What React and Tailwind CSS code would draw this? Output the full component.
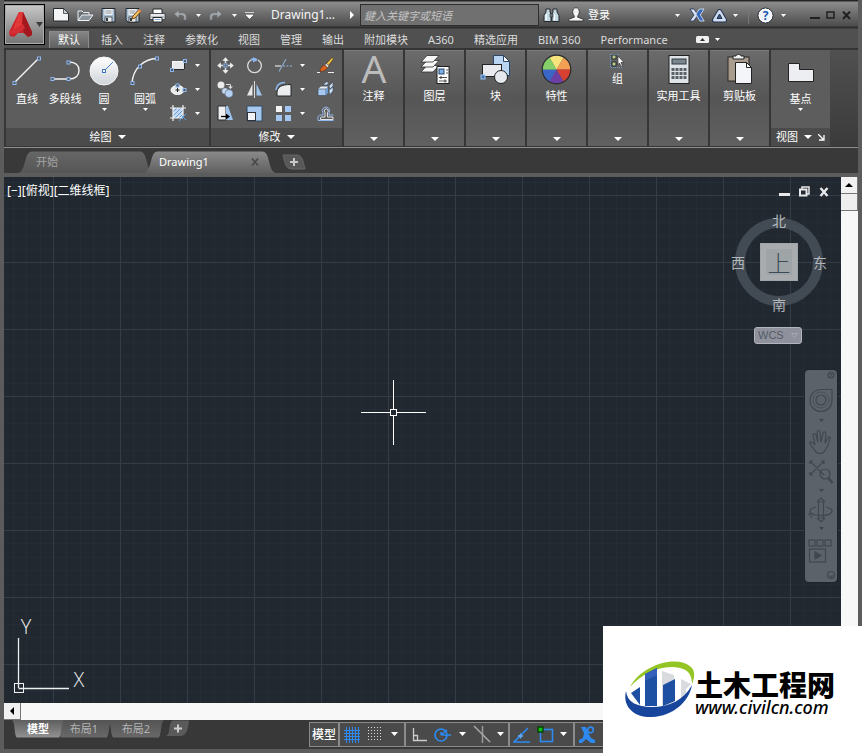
import React from "react";

const outline = "#26292c";
const blue = "#8fb8ee";

function Svg({ w, h, children, className = "" }) {
  return (
    <svg width={w} height={h} viewBox={`0 0 ${w} ${h}`} fill="none" aria-hidden="true" className={`block shrink-0 ${className}`}>
      {children}
    </svg>
  );
}

const Caret = ({ className = "" }) => (
  <Svg w={5} h={3} className={className}><path d="M0 0h5L2.5 3z" fill="#fff" /></Svg>
);
const BigCaret = ({ className = "" }) => (
  <Svg w={8} h={4} className={className}><path d="M0 0h8L4 4z" fill="#fff" /></Svg>
);
const Node = ({ x, y }) => (
  <rect x={x - 1.5} y={y - 1.5} width="3" height="3" fill="#4c5660" stroke={blue} />
);

/* Quick access icons */
const NewIcon = () => (
  <Svg w={16} h={14}><path d="M.5.5h10l5 5v7.500h-15z" fill="#f2f4f6" stroke={outline} /><path d="M10.500.5v5h5z" fill="#cfd4d9" stroke={outline} strokeWidth=".7" /></Svg>
);
const OpenIcon = () => (
  <Svg w={17} h={14}><path d="M1 12V3h4l1.500 1.500H12V7" fill="#6a7076" stroke="#e8edf1" /><path d="M1 12.500L5 7h11l-4 5.500z" fill="#8d959c" stroke="#eef2f5" /></Svg>
);
const SaveIcon = ({ pencil }) => (
  <Svg w={17} h={15}>
    <path d="M1 .5h13v13.500H3l-2-2z" fill="#a9c0d4" stroke={outline} />
    <rect x="3.500" y="1" width="8" height="6" fill="#eef1f3" />
    <path d="M4.500 3h6M4.500 5h6" stroke="#8e969c" />
    <rect x="4" y="9" width="7" height="5" fill="#e9edf0" stroke={outline} strokeWidth=".7" />
    <rect x="5" y="10" width="2" height="3" fill="#33383d" />
    {pencil && <><path d="M7 11l1-3 6-6.500 2 2-6 6.500z" fill="#f2c166" stroke="#7a4a16" /><path d="M13 2.500l1.500-1.500 2 2L15 4.500z" fill="#e08b57" /></>}
  </Svg>
);
const PrintIcon = () => (
  <Svg w={17} h={15}>
    <path d="M4 5V1h9v4" fill="#fff" stroke={outline} />
    <path d="M1 5.500h15v6H1z" fill="#e6eaee" stroke={outline} strokeWidth=".7" />
    <path d="M2 9h13" stroke="#8a939b" />
    <path d="M4 9.500h9V14H4z" fill="#fff" stroke={outline} />
    <path d="M5.500 11.500h6" stroke="#86b5e8" />
  </Svg>
);
const UndoIcon = ({ flip }) => (
  <Svg w={14} h={12} className={flip ? "-scale-x-100" : ""}><path d="M1 5l5-4.200v3h3.500c2.500 0 3.800 1.600 3.800 4V11h-2.600V8.300c0-1.300-.6-2-1.900-2H6v3z" fill="#a3a8ac" stroke="#606366" strokeWidth=".6" /></Svg>
);
const CustomizeIcon = () => (
  <Svg w={9} h={7}><path d="M0 .5h9M1 3h7L4.500 6.500z" fill="#fff" stroke="#fff" strokeWidth=".7" /></Svg>
);
const Binoculars = () => (
  <Svg w={17} h={15}>
    <path d="M3 1h4v3l1 2v7.500H1V7.500L3 4zM10 1h4v3l2 3.500v6H9V6l1-2z" fill="#c3dae2" stroke={outline} />
    <path d="M7 6h3v3H7z" fill="#6f848d" stroke={outline} strokeWidth=".6" />
    <path d="M3.200 6v6M11.500 6v6" stroke="#fff" strokeWidth="1.300" />
  </Svg>
);
const UserIcon = () => (
  <Svg w={16} h={16}><path d="M8 .8c2.200 0 3.300 1.600 3.300 3.900 0 1.900-.7 3.300-1.600 4.200v1.300l4.600 1.700c.8.3 1 .9 1 2.100H.7c0-1.200.2-1.800 1-2.100l4.600-1.700V8.900C5.400 8 4.700 6.600 4.700 4.700 4.700 2.400 5.800.8 8 .8z" fill="#f5f5f5" stroke={outline} strokeWidth=".8" /></Svg>
);
const ExchangeIcon = () => (
  <Svg w={16} h={14}><path d="M1 1h4l3 4.500V8.500L4.500 13H.8L5 7z" fill="#d9e2f3" stroke="#26365e" strokeWidth=".8" /><path d="M15 1h-4.500L7 6l1 2 3 5h4.200L11.300 7z" fill="#3568b9" stroke="#d4def0" strokeWidth=".9" /></Svg>
);
const A360Icon = () => (
  <Svg w={17} h={15}>
    <path d="M8.500 3.500L3.500 12h10z" stroke="#27344f" strokeWidth="5" strokeLinejoin="round" />
    <path d="M8.500 3.500L3.500 12h10z" stroke="#cfdcf2" strokeWidth="3" strokeLinejoin="round" />
    <path d="M8.500 6L6 10.500h5z" fill="#3f5687" stroke="#27344f" />
  </Svg>
);
const HelpIcon = () => (
  <Svg w={17} h={17}>
    <circle cx="8.500" cy="8.500" r="7.500" fill="#eef3fa" stroke="#252a33" />
    <circle cx="8.500" cy="8.500" r="6.300" stroke="#fff" />
    <text x="8.500" y="13" textAnchor="middle" fontSize="12" fontWeight="700" fill="#1f57ae" fontFamily="Open Sans">?</text>
  </Svg>
);

/* Draw panel */
const LineIcon = () => (
  <Svg w={30} h={30}><path d="M2 27L27 2" stroke="#f3f3f3" strokeWidth="1.400" /><Node x={2.500} y={27} /><Node x={27} y={2.500} /></Svg>
);
const PolyIcon = () => (
  <Svg w={31} h={30}><path d="M2.500 23H19c6.500 0 10-3.500 10-8.500S25.500 6 19 6" stroke="#f3f3f3" strokeWidth="1.400" /><Node x={2.500} y={23} /><Node x={18.500} y={23} /><Node x={18.500} y={6.500} /></Svg>
);
const CircleIcon = () => (
  <Svg w={30} h={30}>
    <defs><linearGradient id="cg" x1="0" y1="0" x2="0" y2="1"><stop stopColor="#fff" /><stop offset="1" stopColor="#cfd3d8" /></linearGradient></defs>
    <circle cx="15" cy="15" r="14" fill="url(#cg)" stroke="#f6f6f6" /><path d="M15 15l9-9" stroke="#4a83c4" />
    <rect x="13.500" y="13.500" width="3" height="3" fill="#fff" stroke="#3b78c2" />
  </Svg>
);
const ArcIcon = () => (
  <Svg w={30} h={30}><path d="M2 27C3 13 13 3 27 2.500" stroke="#f3f3f3" strokeWidth="1.400" /><Node x={2.500} y={27} /><Node x={10} y={10.500} /><Node x={27} y={2.500} /></Svg>
);
const RectIcon = () => (
  <Svg w={17} h={13}><rect x="2.500" y="2.500" width="12" height="8" fill="#e7e9eb" stroke="#f9f9f9" /><path d="M3 10.500h11.500v-8" stroke="#272b30" /><Node x={2} y={11} /><Node x={15} y={2} /></Svg>
);
const EllipseIcon = () => (
  <Svg w={17} h={13}><ellipse cx="7.500" cy="7" rx="6.500" ry="4.500" fill="#e9ebed" stroke="#fff" /><path d="M7.500 5v4M5.500 7h4" stroke="#222" /><Node x={7.500} y={2.500} /><Node x={14.500} y={7} /></Svg>
);
const HatchIcon = () => (
  <Svg w={17} h={17}><rect x="3" y="3" width="10" height="10" fill="#c3dbf6" /><path d="M3 7l4-4M3 11l8-8M5 13l8-8M9 13l4-4" stroke="#6d9bd0" /><path d="M3 0v16M13 0v13M0 3h16M0 13h13" stroke="#f2f2f2" strokeWidth="1.200" /><path d="M9 16l7-7M11 10l5 5" stroke="#5d9cdf" /></Svg>
);

/* Modify panel */
const MoveIcon = () => (
  <Svg w={17} h={17}><path d="M8.500 0l3.500 4H9.500v2h-2V4H5zM8.500 17l3.500-4H9.500v-2h-2v2H5zM0 8.500L4 5v2.500h2v2H4V12zM17 8.500L13 5v2.500h-2v2h2V12z" fill="#eceef0" stroke="#3a3d40" strokeWidth=".3" /><Node x={8.500} y={8.500} /></Svg>
);
const RotateIcon = () => (
  <Svg w={17} h={17}><path d="M5 3A6.800 6.800 0 1 0 12 3" stroke="#dadcdd" strokeWidth="1.300" /><path d="M5 3c2-1.300 4-1.300 6 0" stroke={blue} strokeWidth="2" /><path d="M7 0l4.500 3L7 5.500z" fill={blue} /></Svg>
);
const TrimIcon = () => (
  <Svg w={17} h={13}><path d="M0 7h6" stroke="#e4e4e4" strokeWidth="1.200" /><path d="M8 7h2M11.500 7h2M15 7h2" stroke={blue} /><path d="M4 12.500L11 0" stroke="#8cabca" strokeWidth="1.100" /></Svg>
);
const EraseIcon = () => (
  <Svg w={17} h={17}><path d="M0 15.500h3M11 15.500h6" stroke="#eee" /><path d="M9 7l6-6.500 1.500 1.500-5.500 7z" fill="#f3c94c" stroke="#4d3615" strokeWidth=".7" /><path d="M7.500 8l2-1.500L12 9l-1.500 2z" fill="#ddd" stroke="#333" strokeWidth=".5" /><path d="M3 14.500c0-3 2-5.500 4.500-6.500l3 3c-2 2-4 3.500-7.500 3.500z" fill="#d9641f" stroke="#622a0d" strokeWidth=".6" /></Svg>
);
const CopyIcon = () => (
  <Svg w={17} h={17}><circle cx="4" cy="4" r="3.500" fill="#ececec" /><path d="M9 3.500h4.500V7" stroke="#ddd" /><path d="M11 5.500h5L13.500 8z" fill="#ddd" /><circle cx="8" cy="10" r="3.300" fill="#c8d9ee" stroke="#4d5863" strokeWidth=".6" /><circle cx="12" cy="12.500" r="4" fill="#b5d0f0" stroke="#56657a" strokeWidth=".6" /></Svg>
);
const MirrorIcon = () => (
  <Svg w={17} h={17}><path d="M6.500 3v11.500H1z" fill="#e8e8e8" /><path d="M10.500 3v11.500H16z" fill="#9fc4ec" /><path d="M8.500 0v17" stroke="#dedede" /></Svg>
);
const FilletIcon = () => (
  <Svg w={17} h={17}><path d="M2 15V12C2 6 6 3.500 16 3.500V15z" fill="#ebedef" stroke="#26292c" /><path d="M1 9C1.500 4 5 1.500 10 1.500" stroke={blue} strokeWidth="1.500" /></Svg>
);
const ExplodeIcon = () => (
  <Svg w={17} h={17}><path d="M1 8l3-2.500h7L9 8z" fill="#e7edf3" /><path d="M1 8h8v6.500H1z" fill="#a7c8ef" stroke="#34475c" strokeWidth=".6" /><path d="M9 8l2-2.500v6L9 14.500z" fill="#6d9dd2" /><path d="M6 4l3-3h3l-2 3zM12 5l4-4v4l-3 3zM12 9l4-3v4l-3.500 4z" fill="#c8def5" stroke="#39475a" strokeWidth=".6" /></Svg>
);
const StretchIcon = () => (
  <Svg w={17} h={17}><path d="M1 1h8v14H1z" fill="#eef0f2" stroke="#26292c" /><path d="M9 1h2l5 14H9z" fill="#9cc3ed" /><path d="M4 11.500h7" stroke="#000" strokeWidth="1.300" /><path d="M9 8.500l4 3-4 3z" fill="#000" /></Svg>
);
const ScaleIcon = () => (
  <Svg w={17} h={17}><rect x="1" y="1" width="15" height="15" fill="#a8c9ef" stroke="#354b65" /><rect x="1.500" y="7.500" width="8" height="8" fill="#f1f3f5" stroke="#30343a" /></Svg>
);
const ArrayIcon = () => (
  <Svg w={17} h={17}><rect x="1" y="1" width="6" height="6" fill="#f2f2f2" /><rect x="10" y="1" width="6" height="6" fill="#a3c6f0" /><rect x="1" y="10" width="6" height="6" fill="#a3c6f0" /><rect x="10" y="10" width="6" height="6" fill="#a3c6f0" /></Svg>
);
const OffsetIcon = () => (
  <Svg w={17} h={17}><path d="M1 15.500V13c0-2 1-3 3-3h2V8a3.700 3.700 0 1 1 6 0v2h4.500" stroke={blue} /><path d="M3.500 13c0-.6.400-1 1-1H8V7.500a2 2 0 1 1 2.500 0V12H16v2.500H3.500z" stroke="#e0e4e8" /><path d="M1 15.500h15.500" stroke={blue} /></Svg>
);

/* Collapsed panels */
const AnnotateIcon = () => (
  <Svg w={30} h={31}><text x="15" y="29" textAnchor="middle" fontSize="39" fill="#bcbcbc" fontFamily="Noto Sans">A</text></Svg>
);
const LayersIcon = () => (
  <Svg w={30} h={31}>
    {[14, 9, 4].map((y) => <path key={y} d={`M1 ${y + 4}L7 ${y - 2.5}h12L13 ${y + 4}z`} fill="#f7f7f7" stroke="#2b2e31" strokeWidth=".8" />)}
    <rect x="17" y="12.500" width="12" height="17" fill="#fff" stroke="#1d1f21" />
    <rect x="19" y="15" width="5" height="5" fill="#7daee6" stroke="#23456d" /><path d="M26 16h2M26 19h2M19 23.500h8M19 27h8" stroke="#555" /><path d="M21 22v3M25 25.500v3" stroke="#333" />
  </Svg>
);
const BlockIcon = () => (
  <Svg w={31} h={31}>
    <path d="M13.500 1.500h10l6 6v14h-16z" fill="#bad5f2" stroke="#2b4566" /><path d="M23.500 1.500v6h6z" fill="#fff" stroke="#2b4566" />
    <rect x="2.500" y="10.500" width="19" height="12" fill="#e8eaed" stroke="#222" /><circle cx="21" cy="23" r="6.500" fill="#e5e8ec" stroke="#222" />
    <rect x="1" y="21" width="4" height="4" fill="#4477ad" stroke="#9cc6f1" />
  </Svg>
);
const wheel = ["#f8e47c", "#f3a053", "#d8402f", "#6b3fa3", "#3a66c6", "#86d06a"];
const PropertiesIcon = () => (
  <Svg w={31} h={31}>
    {wheel.map((c, i) => {
      const a = ((i * 60 - 120) * Math.PI) / 180;
      const b = ((i * 60 - 60) * Math.PI) / 180;
      return <path key={c} d={`M15.500 15.500L${15.5 + 14 * Math.cos(a)} ${15.5 + 14 * Math.sin(a)}A14 14 0 0 1 ${15.5 + 14 * Math.cos(b)} ${15.5 + 14 * Math.sin(b)}z`} fill={c} />;
    })}
    <circle cx="15.500" cy="15.500" r="14.300" stroke="#2b2b2b" strokeWidth="1.200" />
  </Svg>
);
const GroupIcon = () => (
  <Svg w={16} h={14}><rect x="2" y="1" width="4" height="4" fill="#b9cd8e" stroke="#26292c" /><rect x="2" y="8" width="4" height="4" fill="#b9cd8e" stroke="#26292c" /><path d="M.5 0v13.500H12M.5.5H9" stroke="#6d99d0" strokeDasharray="1 1" /><path d="M8 2l6 6.500h-3l1.500 3.500-1.500.5L9.500 9 8 10.500z" fill="#fff" stroke="#222" strokeWidth=".6" /></Svg>
);
const CalcIcon = () => (
  <Svg w={22} h={31}><rect x="1" y="1.500" width="20" height="28" fill="#dfe3e7" stroke="#222" /><rect x="4" y="5" width="14" height="5" fill="#7a8790" stroke="#33383c" />
    {[15, 19, 23].map((y) => [4, 8, 12, 16].map((x) => <rect key={`${x}-${y}`} x={x - 0.5} y={y - 1} width="3" height="3" fill="#596168" />))}
  </Svg>
);
const PasteIcon = () => (
  <Svg w={26} h={31}><rect x="1" y="3" width="21" height="24" fill="#a89c8f" stroke="#2c2824" /><path d="M6 2h3c0-2 5-2 5 0h3v3H6z" fill="#f2f2f2" stroke="#222" /><path d="M8.500 8.500h11l5 5v16h-16z" fill="#f3f5f9" stroke="#222" /><path d="M19.500 8.500v5h5z" fill="#fff" stroke="#222" /></Svg>
);
const BaseIcon = () => (
  <Svg w={28} h={30}><path d="M1.500 7.500h11v6h14v12h-25z" fill="#eceef1" stroke="#222" /></Svg>
);

const ribbonTabs = ["插入", "注释", "参数化", "视图", "管理", "输出", "附加模块", "A360", "精选应用", "BIM 360", "Performance"];

function TitleBar() {
  return (
    <div className="flex h-[27px] items-center pt-[3px]">
      <nav aria-label="快速访问" className="ml-1 flex items-center">
        <button aria-label="新建" className="flex w-6 justify-center"><NewIcon /></button>
        <button aria-label="打开" className="flex w-6 justify-center"><OpenIcon /></button>
        <button aria-label="保存" className="flex w-6 justify-center"><SaveIcon /></button>
        <button aria-label="另存为" className="flex w-6 justify-center"><SaveIcon pencil /></button>
        <button aria-label="打印" className="flex w-6 justify-center"><PrintIcon /></button>
        <button aria-label="放弃" className="flex w-9 items-center justify-between pl-1"><UndoIcon /><Caret className="mr-1" /></button>
        <button aria-label="重做" className="flex w-9 items-center justify-between pl-1"><UndoIcon flip /><Caret className="mr-1" /></button>
        <button aria-label="自定义" className="flex w-4 justify-center"><CustomizeIcon /></button>
      </nav>
      <span className="ml-3.5 whitespace-nowrap text-[12px] text-gray-100">Drawing1...</span>
      <div className="ml-auto flex items-center">
        <button aria-label="展开搜索" className="mr-1.5"><Svg w={4} h={8}><path d="M0 0v8l4-4z" fill="#fff" /></Svg></button>
        <input aria-label="搜索" placeholder="鍵入关键字或短语" className="h-[22px] w-[179px] border border-[#2d2d2d] bg-[#707070] px-[3px] text-[11px] italic text-white outline-none placeholder:text-[#c4c4c4]" />
        <button aria-label="查找" className="ml-1"><Binoculars /></button>
        <button className="ml-2 flex w-[112px] items-center text-[11px] text-white"><UserIcon /><span className="ml-1">登录</span><Caret className="ml-auto" /></button>
        <button aria-label="Exchange" className="ml-[9px]"><ExchangeIcon /></button>
        <button aria-label="A360" className="ml-1.5 flex items-center"><A360Icon /><Caret className="ml-[5px]" /></button>
        <span className="ml-2.5 h-[17px] w-px bg-[#777]" />
        <button aria-label="帮助" className="ml-2 flex items-center"><HelpIcon /><Caret className="ml-[7px]" /></button>
        <button aria-label="最小化" className="ml-[22px] p-0.5"><Svg w={11} h={10}><path d="M0 8h10" stroke="#202020" strokeWidth="2" /></Svg></button>
        <button aria-label="最大化" className="ml-px p-0.5"><Svg w={10} h={9}><rect x="1" y="1" width="7" height="6" stroke="#202020" strokeWidth="1.500" /></Svg></button>
        <button aria-label="关闭" className="ml-0.5 mr-1 p-0.5"><Svg w={10} h={9}><path d="M1 .5l7 7.500M8 .5L1 8" stroke="#202020" strokeWidth="2" /></Svg></button>
      </div>
    </div>
  );
}

function Header() {
  return (
    <header className="flex h-12 bg-[linear-gradient(#262626_0_1px,#8c8c8c_2px,#4c4c4c_26px,#2d2d2d_27px_28px,#505050_29px)]">
      <button aria-label="应用程序菜单" className="mt-1 flex h-[41px] w-[41px] shrink-0 items-center border border-black bg-gradient-to-b from-[#c8c8c8] to-[#747474] pl-1 shadow-[inset_0_0_0_1px_#aaa]">
        <Svg w={24} h={26}>
          <path d="M10 0h4l9 20v3l-4 2-4-4H9l-4 4-4-1-1-4z" fill="#c9252b" />
          <path d="M10 0h4l-1 13-9 5z" fill="#e2383a" />
          <path d="M14 0l9 20v3l-4 2-4-4-2-8z" fill="#a3181e" />
          <path d="M1 19c4-1 9-3 13-7l2 4c-4 4-8 5-12 6l-4-1z" fill="#d62f33" />
        </Svg>
        <Svg w={7} h={5} className="ml-[3px]"><path d="M0 0h7L3.500 5z" fill="#3c3c3c" /></Svg>
      </button>
      <div className="flex min-w-0 flex-1 flex-col">
        <TitleBar />
        <nav className="mt-1 flex h-[17px] items-center gap-5 whitespace-nowrap pl-1 text-[11px] text-[#dcdcdc]">
          <button className="-mr-2 h-[17px] w-10 border border-b-0 border-[#8c8c8c] bg-gradient-to-b from-[#858585] to-[#606060] text-white">默认</button>
          {ribbonTabs.map((t) => <button key={t} className="leading-4">{t}</button>)}
          <button aria-label="最小化功能区" className="ml-2 flex items-center gap-1.5">
            <Svg w={13} h={7}><rect width="13" height="7" rx="1.500" fill="#f0f0f0" /><path d="M4 5h5L6.500 2z" fill="#333" /></Svg><Caret />
          </button>
        </nav>
      </div>
    </header>
  );
}

function BigTool({ icon, label, caret, className = "" }) {
  return (
    <button className={`flex flex-col items-center text-[11px] leading-4 text-white ${className}`}>
      {icon}<span className="mt-[5px] whitespace-nowrap">{label}</span>{caret && <Caret className="mt-px" />}
    </button>
  );
}

function SmallTool({ icon, label, caret }) {
  return (
    <button aria-label={label} className="flex h-6 items-center gap-2">
      <span className="flex w-[17px] justify-center">{icon}</span>{caret && <Caret />}
    </button>
  );
}

function PanelTitle({ children, launcher }) {
  return (
    <button className="flex h-[18px] w-full items-center justify-center gap-1.5 bg-[#4b4b4b] text-[11px] text-white">
      {children}<BigCaret />
      {launcher && <Svg w={7} h={7}><path d="M0 0l5 5M6 1v5H1" stroke="#fff" strokeWidth="1.300" /></Svg>}
    </button>
  );
}

const collapsed = [
  ["注释", AnnotateIcon], ["图层", LayersIcon], ["块", BlockIcon], ["特性", PropertiesIcon],
  ["组", GroupIcon], ["实用工具", CalcIcon], ["剪贴板", PasteIcon],
];

function Ribbon() {
  return (
    <section aria-label="功能区" className="flex h-[100px] gap-0.5 border-b border-t-2 border-b-[#8e8e8e] border-t-[#343434] bg-[#363636] pb-px pl-0.5">
      <div className="flex w-[203px] shrink-0 flex-col bg-[#5d5d5d]">
        <div className="flex flex-1 pl-0.5 pt-1.5">
          <BigTool className="w-[38px]" icon={<LineIcon />} label="直线" />
          <BigTool className="w-[38px]" icon={<PolyIcon />} label="多段线" />
          <BigTool className="w-[40px]" icon={<CircleIcon />} label="圆" caret />
          <BigTool className="w-[42px]" icon={<ArcIcon />} label="圆弧" caret />
          <div className="-mt-[3px] ml-[4px]">
            <SmallTool icon={<RectIcon />} label="矩形" caret />
            <SmallTool icon={<EllipseIcon />} label="椭圆" caret />
            <SmallTool icon={<HatchIcon />} label="图案填充" caret />
          </div>
        </div>
        <PanelTitle>绘图</PanelTitle>
      </div>
      <div className="flex w-[131px] shrink-0 flex-col bg-[#5d5d5d]">
        <div className="grid flex-1 grid-cols-[29px_29px_42px_17px] content-start pl-1.5 pt-[3px]">
          <SmallTool icon={<MoveIcon />} label="移动" />
          <SmallTool icon={<RotateIcon />} label="旋转" />
          <SmallTool icon={<TrimIcon />} label="修剪" caret />
          <SmallTool icon={<EraseIcon />} label="删除" />
          <SmallTool icon={<CopyIcon />} label="复制" />
          <SmallTool icon={<MirrorIcon />} label="镜像" />
          <SmallTool icon={<FilletIcon />} label="圆角" caret />
          <SmallTool icon={<ExplodeIcon />} label="分解" />
          <SmallTool icon={<StretchIcon />} label="拉伸" />
          <SmallTool icon={<ScaleIcon />} label="缩放" />
          <SmallTool icon={<ArrayIcon />} label="阵列" caret />
          <SmallTool icon={<OffsetIcon />} label="偏移" />
        </div>
        <PanelTitle>修改</PanelTitle>
      </div>
      {collapsed.map(([label, Icon]) => (
        <button key={label} className="flex w-[59px] shrink-0 flex-col items-center border-t border-[#7b7b7b] bg-gradient-to-b from-[#6b6b6b] via-[#565656] to-[#606060] pb-[5px] pt-[3px] text-[11px] leading-4 text-white">
          <Icon /><span className="mt-[3px] whitespace-nowrap">{label}</span><BigCaret className="mt-auto" />
        </button>
      ))}
      <div className="flex w-[59px] shrink-0 flex-col bg-[#5d5d5d]">
        <div className="flex flex-1 justify-center pt-1.5"><BigTool icon={<BaseIcon />} label="基点" caret /></div>
        <PanelTitle launcher>视图</PanelTitle>
      </div>
      <div className="-ml-0.5 flex-1 bg-gradient-to-b from-[#505050] to-[#3b3b3b]" />
    </section>
  );
}

function TabShape({ from, to, className = "" }) {
  const id = `t${from.slice(1)}`;
  return (
    <svg className={`absolute inset-0 h-full w-full ${className}`} viewBox="0 0 124 22" preserveAspectRatio="none" aria-hidden="true">
      <defs><linearGradient id={id} x1="0" y1="0" x2="0" y2="1"><stop stopColor={from} /><stop offset="1" stopColor={to} /></linearGradient></defs>
      <path d="M0 22C8 20 5 .5 13 .5H111C119 .5 116 20 124 22z" fill={`url(#${id})`} />
    </svg>
  );
}

function FileTabs() {
  return (
    <nav aria-label="图形" className="flex h-[29px] items-end border-b-4 border-[#5c5c5c] bg-[#393939] pl-[14px] text-[11px]">
      <button className="relative h-[22px] w-[136px] text-left text-[#a5a5a5]"><TabShape from="#666666" to="#565656" /><span className="relative pl-[18px]">开始</span></button>
      <div className="relative -ml-2.5 flex h-[22px] w-[132px] items-center text-white">
        <TabShape from="#8a8a8a" to="#606060" />
        <button className="relative flex-1 pl-[15px] text-left">Drawing1</button>
        <button aria-label="关闭 Drawing1" className="relative mr-4"><Svg w={9} h={8}><path d="M1 .5l6 7M7 .5l-6 7" stroke="#484848" strokeWidth="1.600" /></Svg></button>
      </div>
      <button aria-label="新图形" className="relative mb-[3px] ml-1.5 h-4 w-6"><Svg w={24} h={16}><path d="M1 1h14c5 0 6 6 8 14H10C3 15 3 8 1 1z" fill="#585858" stroke="#676767" /><path d="M12 4v8M8 8h8" stroke="#c8c8c8" strokeWidth="2" /></Svg></button>
    </nav>
  );
}

function Compass() {
  return (
    <div className="absolute right-[13px] top-[33px] h-[104px] w-[98px] leading-4 text-[#b4b7ba]">
      <div className="absolute inset-x-[5px] inset-y-2 rounded-full border-[10px] border-[#424a54]" />
      <div className="relative grid h-full grid-cols-[16px_1fr_16px] grid-rows-[20px_1fr_20px] items-center justify-items-center [font-family:'Noto_Sans_CJK_SC',sans-serif] text-[14px]">
        <span className="col-start-2">北</span>
        <span className="col-start-1 row-start-2">西</span>
        <button className="col-start-2 row-start-2 h-[38px] w-[38px] border border-[#a0a4a7] bg-[#9fa4a7] text-[23px] font-light leading-8 text-[#3d4956] shadow-[inset_0_0_0_5px_#a9acae]">上</button>
        <span className="col-start-3 row-start-2">东</span>
        <span className="col-start-2 row-start-3">南</span>
      </div>
    </div>
  );
}

function NavBar() {
  return (
    <div className="absolute right-1 top-[193px] flex h-[212px] w-8 justify-center rounded bg-[#5c6269] shadow-[0_0_0_1px_#1e242b]">
      <Svg w={32} h={212}>
        <g stroke="#41474e" strokeWidth="1.200">
          <circle cx="26" cy="5" r="3" /><path d="M24.500 3.500l3 3M27.500 3.500l-3 3" />
          <path d="M16 19.500h11V30a11 11 0 1 1-11-10.500z" /><circle cx="16" cy="30" r="5" /><circle cx="16" cy="30" r="8" strokeWidth=".7" />
          <path d="M11 82c-3-4-5-7-6-9s2-2 5 2L8 65c0-2 2-2 3 0l2 7-1-10c0-2 3-2 3 0l1 10 2-9c1-2 3-1 3 1l-1 9 3-5c1-2 3-1 2 1-1 5-3 9-6 13-2 2-6 2-8 0z" />
          <path d="M5 91l14 14M19 91L5 105M5 94v-3h3M16 91h3v3M5 102v3h3" /><circle cx="20" cy="104" r="5" /><path d="M23.500 108l4 5" strokeWidth="2.500" />
          <path d="M13.500 132h5v16h-5zM12 132l4-4 4 4M12 148l4 4 4-4" /><path d="M11 137c-8 2-8 7 0 8s12 1 15-2c3-3-1-5-5-6M7 148l-3-4 4-1" />
          <rect x="4" y="170" width="6" height="6" /><rect x="12" y="170" width="6" height="6" /><rect x="20" y="170" width="6" height="6" />
          <rect x="4.500" y="179" width="16" height="13" /><path d="M10 182v7l6-3.500z" fill="#41474e" />
          <circle cx="26" cy="205" r="3.500" /><path d="M24.500 205.500l1.500 1.500 2-1.500" />
        </g>
        <path d="M14 49h5l-2.500 3zM14 119h5l-2.500 3zM14 157h5l-2.500 3z" fill="#3e444b" />
      </Svg>
    </div>
  );
}

function Canvas() {
  return (
    <div className="relative min-w-0 flex-1 overflow-hidden bg-[#212830]">
      <svg className="absolute inset-0 h-full w-full" aria-hidden="true">
        <defs>
          <pattern id="grid" x="49" y="18" width="67" height="67" patternUnits="userSpaceOnUse">
            <path d="M13.500 0v67M27.500 0v67M40.500 0v67M54.500 0v67M0 13.500h67M0 27.500h67M0 40.500h67M0 54.500h67" stroke="#252c35" />
            <path d="M.5 0v67M0 .5h67" stroke="#343d47" />
          </pattern>
        </defs>
        <rect width="100%" height="100%" fill="url(#grid)" />
      </svg>
      <div className="relative flex items-start justify-between pl-[3px] pr-3 pt-1.5 text-white">
        <div className="flex text-[12px] leading-4"><button>[−]</button><button>[俯视]</button><button>[二维线框]</button></div>
        <div className="flex items-center gap-[9px] pt-[3px]">
          <button aria-label="最小化视口"><Svg w={11} h={11}><path d="M0 8.500h11" stroke="#e8e8ea" strokeWidth="3" /></Svg></button>
          <button aria-label="还原视口"><Svg w={11} h={11}><path d="M3 3V1h7v7H8" stroke="#e8e8ea" strokeWidth="1.500" /><rect x="1" y="3.500" width="6.500" height="6" stroke="#e8e8ea" strokeWidth="2" /></Svg></button>
          <button aria-label="关闭视口"><Svg w={10} h={10}><path d="M1.500 1l7 8M8.500 1l-7 8" stroke="#e8e8ea" strokeWidth="2.400" /></Svg></button>
        </div>
      </div>
      <Compass />
      <button className="absolute right-[39px] top-[150px] flex h-[17px] w-12 items-center justify-between rounded-[3px] border border-[#b2b4be] bg-[#8f929c] px-[3px] font-[Liberation_Sans] text-[11px] text-[#555a66]">WCS<Svg w={7} h={5}><path d="M.5.5h6l-3 4z" stroke="#a5a8b2" /></Svg></button>
      <NavBar />
      <Svg w={65} h={65} className="absolute left-[357px] top-[203px]"><path d="M32.500 0v29M32.500 36v29M0 32.500h29M36 32.500h29" stroke="#fff" /><rect x="29.500" y="29.500" width="6" height="6" stroke="#fff" /></Svg>
      <Svg w={90} h={90} className="absolute bottom-0 left-0">
        <g stroke="#eceeef"><path d="M14.500 25v50M14.500 75.500H65" strokeWidth="1.300" /><rect x="10.500" y="70.500" width="9" height="9" /></g>
        <g fill="#eceeef" fontFamily="Open Sans" fontWeight="300" fontSize="20" textAnchor="middle"><text x="22" y="21">Y</text><text x="75" y="74">X</text></g>
      </Svg>
    </div>
  );
}

const LayoutTab = ({ children, active, className }) => (
  <button className={`relative h-[18px] text-[11px] leading-4 ${active ? "z-10 font-bold text-white" : "text-[#b4b4b4]"} ${className}`}>
    <TabShape from={active ? "#929292" : "#686868"} to={active ? "#5e5e5e" : "#545454"} className="-scale-y-100" />
    <span className="relative">{children}</span>
  </button>
);

const cell = "flex h-[25px] items-center border border-[#8b8b8b] bg-[#4a4a4a]";

function Footer() {
  return (
    <footer className="flex h-[29px] bg-[#383838]">
      <nav aria-label="布局" className="flex w-[305px] shrink-0 pl-2">
        <LayoutTab active className="w-[52px]">模型</LayoutTab>
        <LayoutTab className="-ml-2 w-14">布局1</LayoutTab>
        <LayoutTab className="-ml-1 w-14">布局2</LayoutTab>
        <button aria-label="新布局" className="ml-0.5 h-[17px]"><Svg w={24} h={17}><path d="M0 16C5 14 2 2 7 .5h16C22 11 20 15 15 16z" fill="#5a5a5a" /><path d="M12 4.500v8M8 8.500h8" stroke="#ccc" strokeWidth="2" /></Svg></button>
      </nav>
      <div className="flex pt-0.5 text-[12px] font-medium text-white">
        <button className={`${cell} w-[30px] justify-center`}>模型</button>
        <div className={`${cell} w-[66px] justify-between pl-1 pr-1.5`}>
          <button aria-label="栅格"><Svg w={16} h={16}><path d="M2.500 0v16M5.500 0v16M8.500 0v16M11.500 0v16M14.500 0v16M0 3.500h16M0 6.500h16M0 9.500h16M0 12.500h16" stroke="#2c8af2" /></Svg></button>
          <button aria-label="捕捉" className="flex items-center gap-2"><Svg w={15} h={15}><path d="M0 .5h15M0 3.500h15M0 6.500h15M0 9.500h15M0 12.500h15" stroke="#ddd" strokeDasharray="1 2" /></Svg><Svg w={7} h={5}><path d="M0 0h7L3.500 4z" fill="#fff" /></Svg></button>
        </div>
        <div className={`${cell} w-[104px] justify-between pl-1.5 pr-1`}>
          <button aria-label="正交"><Svg w={15} h={14}><path d="M1.500 0v12.500H15M1.500 7.500h4v5" stroke="#ccc" strokeWidth="1.300" /></Svg></button>
          <button aria-label="极轴" className="flex items-center gap-2"><Svg w={17} h={16}><circle cx="7" cy="8" r="6" stroke="#2c8af2" strokeWidth="1.700" /><path d="M7 8h10M7 8l6-5M7 5v3" stroke="#2c8af2" strokeWidth="1.500" /></Svg><Svg w={7} h={5}><path d="M0 0h7L3.500 4z" fill="#fff" /></Svg></button>
          <button aria-label="等轴测" className="flex items-center gap-1.5"><Svg w={18} h={19}><path d="M9.500 1v17" stroke="#999" strokeWidth="1.500" /><path d="M1 1l16 16" stroke="#aaa" strokeWidth="1.400" /></Svg><Svg w={7} h={5}><path d="M0 0h7L3.500 4z" fill="#fff" /></Svg></button>
        </div>
        <div className={`${cell} w-[65px] justify-between pl-[3px] pr-1.5`}>
          <button aria-label="对象捕捉追踪"><Svg w={18} h={16}><path d="M17 15H1L15 1" stroke="#2c8af2" strokeWidth="1.600" /><path d="M7.500 6.500v5M5 9h5" stroke="#62acff" strokeWidth="1.400" /></Svg></button>
          <button aria-label="对象捕捉" className="flex items-center gap-1.5"><Svg w={17} h={17}><rect x="3.500" y="3.500" width="12" height="12" stroke="#2c8af2" strokeWidth="1.600" /><rect x="1" y="1" width="5" height="5" fill="#14c014" stroke="#063f06" strokeWidth="1.400" /></Svg><Svg w={7} h={5}><path d="M0 0h7L3.500 4z" fill="#fff" /></Svg></button>
        </div>
        <div className={`${cell} w-[120px] pl-[3px]`}>
          <button aria-label="注释可见性"><Svg w={18} h={18}><path d="M3 1h5l2 6 3 5 4 2v3h-4l-5-4-4 4H1v-3l4-2 1-5z" fill="#2c8af2" /><circle cx="12.500" cy="4" r="2.800" stroke="#2c8af2" strokeWidth="1.700" /></Svg></button>
        </div>
      </div>
    </footer>
  );
}

function Watermark() {
  return (
    <aside className="fixed bottom-0 right-0 flex h-[127px] w-[259px] items-center bg-white pl-[22px]">
      <Svg w={70} h={60}>
        <path d="M5 27C16 6 51-6 66 7c5 5 3 12 1 17 0-8-3-14-12-16C38 4 17 13 5 27z" fill="#93c524" />
        <path d="M37 11l12 4v27l-12 5zM56 19l10 5-5 5v7l-5 5z" fill="#d8dadd" />
        <path d="M20 14l12-6v38H20zM38 25l12-6v22l-12 5zM6 33l9-6v18z" fill="#1d4fa2" />
        <path d="M20 14l12-6v7l-12 6z" fill="#345fba" />
        <path d="M1 31c1 11 11 16 26 16 17 0 32-7 40-22-3 17-19 31-40 32C10 58-3 47 1 31z" fill="#17459c" />
      </Svg>
      <div className="whitespace-nowrap pt-2.5 text-black">
        <div className="text-[28px] font-black leading-6">土木工程网</div>
        <div className="text-[18px] font-medium italic leading-5">www.civilcn.com</div>
      </div>
    </aside>
  );
}

export default function App() {
  return (
    <div className="flex min-h-screen flex-col overflow-hidden border-x-4 border-b-4 border-[#5c5c5c] bg-[#383838] [font-family:'Noto_Sans','Noto_Sans_CJK_SC',sans-serif]">
      <Header />
      <Ribbon />
      <FileTabs />
      <main className="flex min-h-[420px] flex-1">
        <Canvas />
        <div className="flex w-[17px] shrink-0 flex-col bg-[#f8f8f8]">
          <button aria-label="向上滚动" className="flex h-[17px] items-center justify-center border-b border-r border-[#777] bg-[#f1f1f1]"><Svg w={8} h={4}><path d="M0 4h8L4 0z" fill="#000" /></Svg></button>
          <div className="h-[17px] border-b border-r border-[#777] bg-[#eee]" />
        </div>
      </main>
      <div className="flex h-[17px] bg-[#f8f8f8]">
        <button aria-label="向左滚动" className="flex w-[17px] items-center justify-center border-b border-r border-[#777] bg-[#f1f1f1]"><Svg w={4} h={8}><path d="M4 0v8L0 4z" fill="#000" /></Svg></button>
      </div>
      <Footer />
      <Watermark />
    </div>
  );
}
